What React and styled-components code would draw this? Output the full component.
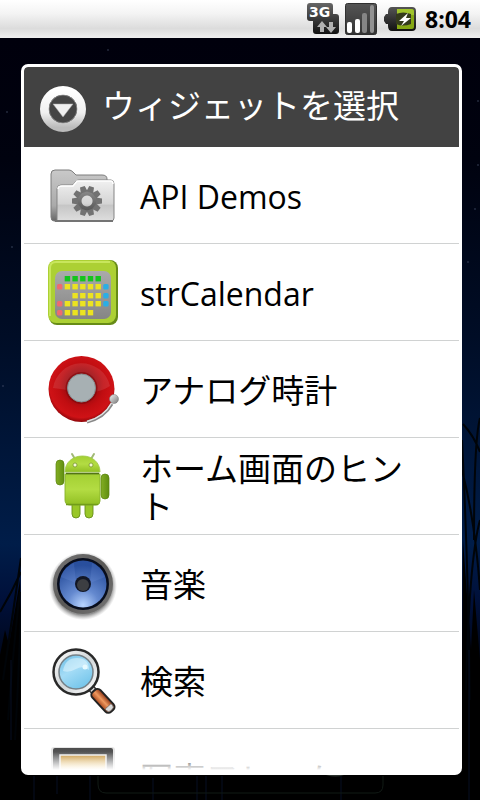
import styled, { createGlobalStyle } from "styled-components";

const GlobalStyle = createGlobalStyle`
  * {
    box-sizing: border-box;
  }

  body {
    margin: 0;
    background: #000;
    font-family: "Noto Sans", "Noto Sans CJK JP", sans-serif;
  }
`;

const Screen = styled.div`
  position: relative;
  display: flex;
  flex-direction: column;
  height: 100vh;
  overflow: hidden;
  background: linear-gradient(#00000c 5%, #00020f 20%, #000d26 42%, #001d49 68%, #00103a 75%, #000 88%);
`;

const Wallpaper = styled.svg`
  position: absolute;
  inset: 0;
  width: 100%;
  height: 100%;
`;

const StatusBar = styled.header`
  position: relative;
  display: flex;
  flex: none;
  align-items: center;
  justify-content: flex-end;
  gap: 6px;
  height: 38px;
  padding-right: 9px;
  background: linear-gradient(#fff, #f4f4f4 35%, #dcdcdc 75%, #f0f0f0);
`;

const Clock = styled.time`
  margin-left: 2px;
  color: #000;
  font-family: "Open Sans", "Noto Sans", sans-serif;
  font-size: 23px;
  font-weight: 700;
  line-height: 38px;
`;

const Backdrop = styled.main`
  position: relative;
  display: flex;
  flex: 1;
  min-height: 0;
  padding: 26px 18px 25px 21px;
`;

const Dialog = styled.section`
  display: flex;
  flex: 1;
  flex-direction: column;
  min-width: 0;
  overflow: hidden;
  border: 3px solid #fff;
  border-bottom-width: 5px;
  border-radius: 7px;
  background: #fff;
`;

const DialogHeader = styled.div`
  display: flex;
  flex: none;
  align-items: center;
  gap: 14px;
  height: 80px;
  padding: 0 14px;
  border-radius: 4px 4px 0 0;
  background: #424242;
`;

const Title = styled.h1`
  margin: 0;
  padding-bottom: 3px;
  color: #fff;
  font-size: 33px;
  font-weight: 400;
  line-height: 38px;
  white-space: nowrap;
`;

const ListFrame = styled.div`
  position: relative;
  flex: 1;
  min-height: 0;

  &::after {
    content: "";
    position: absolute;
    right: 0;
    bottom: 0;
    left: 0;
    height: 18px;
    background: linear-gradient(rgba(255, 255, 255, 0), #fff);
    pointer-events: none;
  }
`;

const List = styled.ul`
  height: 100%;
  margin: 0;
  padding: 0;
  overflow-y: auto;
  list-style: none;
  scrollbar-width: none;
`;

const Item = styled.li`
  border-bottom: 1px solid #d0d2d2;
`;

const ItemButton = styled.button`
  display: flex;
  align-items: center;
  gap: 21px;
  width: 100%;
  min-height: 96px;
  padding: 3px 32px 0 23px;
  border: 0;
  background: none;
  color: #000;
  font-family: inherit;
  font-size: 33px;
  line-height: 38px;
  text-align: left;
  cursor: pointer;

  svg {
    flex: none;
  }
`;

const Latin = styled.span`
  font-family: "Open Sans", "Noto Sans", sans-serif;
  font-size: 32px;
`;

function NightSky() {
  return (
    <Wallpaper viewBox="0 0 480 800" preserveAspectRatio="none" aria-hidden="true">
      <g fill="#5a6680" opacity=".4">
        <circle cx="108" cy="50" r="1" />
        <circle cx="478" cy="101" r="1" />
        <circle cx="478" cy="165" r="1" />
        <circle cx="475" cy="209" r="1" />
        <circle cx="7" cy="112" r="1" />
        <circle cx="3" cy="386" r="1" />
        <circle cx="468" cy="262" r="1" />
        <circle cx="12" cy="247" r="1" />
      </g>
      <path
        d="M0 655 5 630 9 645 20 580 22 650 22 800H0ZM480 660 474 590 471 650 463 540 461 800H480Z"
        fill="#000"
      />
      <g fill="none" stroke="#000408" strokeWidth="2">
        <path d="M0 612Q12 592 21 572M3 680Q12 620 21 558M8 720Q14 640 20 592M15 740Q18 690 21 610" />
        <path d="M462 440Q468 560 470 700M480 418Q474 440 474 540M463 424Q474 436 480 452M480 520Q469 560 466 690M462 470Q475 520 480 590" />
      </g>
      <g stroke="#10204e" opacity=".45">
        <path d="M34 776V800M57 776V794M90 776V800M153 778V800M197 776V800M206 776V800M222 776V800M341 776V800M469 650V800M11 660V740" />
      </g>
      <path d="M98 776V784Q98 793 106 793H375Q383 793 383 785V776" fill="none" stroke="#111a15" />
      <path d="M326 775Q336 778 344 775Z" fill="#29302b" />
    </Wallpaper>
  );
}

const NetworkLabel = styled.text`
  fill: #fff;
  font-family: "DejaVu Sans", sans-serif;
  font-size: 14px;
  font-weight: 700;
`;

function NetworkIcon() {
  return (
    <svg width="32" height="32" viewBox="0 0 32 32" role="img" aria-label="3G">
      <defs>
        <linearGradient id="net" x2="0" y2="1">
          <stop stopColor="#666" />
          <stop offset="1" stopColor="#111" />
        </linearGradient>
      </defs>
      <path
        d="M3 0H23Q26 0 26 3V11H29Q32 11 32 14V28Q32 31 29 31H9Q6 31 6 28V18H3Q0 18 0 15V3Q0 0 3 0Z"
        fill="url(#net)"
      />
      <NetworkLabel x="2" y="14">
        3G
      </NetworkLabel>
      <path d="M15 18 20 24H17V29H13V24H10ZM24 30 19 24H22V19H26V24H29Z" fill="#b0b0b0" />
    </svg>
  );
}

function SignalIcon() {
  return (
    <svg width="32" height="32" viewBox="0 0 32 32" aria-hidden="true">
      <defs>
        <linearGradient id="sig" x2="0" y2="1">
          <stop stopColor="#555" />
          <stop offset="1" stopColor="#333" />
        </linearGradient>
      </defs>
      <rect x=".5" y=".5" width="31" height="31" rx="2" fill="url(#sig)" stroke="#303030" />
      <rect x="2" y="19" width="5" height="11" rx="2" fill="#fff" />
      <rect x="10" y="16" width="5" height="14" rx="2" fill="#fff" />
      <rect x="17" y="10" width="5" height="20" rx="2" fill="#858585" />
      <rect x="25" y="2" width="4" height="28" rx="2" fill="#929292" />
    </svg>
  );
}

function BatteryIcon() {
  return (
    <svg width="34" height="24" viewBox="0 0 34 24" aria-hidden="true">
      <defs>
        <linearGradient id="bat" x2="0" y2="1">
          <stop stopColor="#555" />
          <stop offset="1" stopColor="#111" />
        </linearGradient>
      </defs>
      <path d="M9 0H29Q33 0 33 4V20Q33 24 29 24H9Q5 24 5 19V17H3L1 14V10L3 7H5V5Q5 0 9 0Z" fill="url(#bat)" />
      <path d="M14 2H29Q31 2 31 4V20Q31 22 29 22H14Z" fill="#86a814" />
      <path d="M14 2H28Q31 2 31 5V8H14Z" fill="#a0c42c" />
      <path d="M13 7Q20 4 28 7V17Q20 20 13 17Z" fill="#343b1c" />
      <path d="M25 6 16 14H21L18 19 28 11H23Z" fill="#fff" />
    </svg>
  );
}

function DropdownIcon() {
  return (
    <svg width="50" height="50" viewBox="0 0 50 50" aria-hidden="true">
      <defs>
        <linearGradient id="ring" x2="0" y2="1">
          <stop stopColor="#fff" />
          <stop offset=".6" stopColor="#f0f0f0" />
          <stop offset="1" stopColor="#bbb" />
        </linearGradient>
      </defs>
      <circle cx="25" cy="28" r="22" fill="#282828" opacity=".3" />
      <circle cx="25" cy="27" r="18.5" fill="none" stroke="url(#ring)" strokeWidth="9" />
      <circle cx="25" cy="27" r="14" fill="#454545" stroke="#9b9b9b" strokeWidth=".7" />
      <path d="M15 22H35L25 35Z" fill="#f0f0f0" stroke="#aaa" strokeWidth=".5" />
    </svg>
  );
}

function FolderIcon() {
  const teeth = Array.from({ length: 10 }, (_, i) => i * 36);

  return (
    <svg width="72" height="72" viewBox="0 0 72 72" aria-hidden="true">
      <defs>
        <linearGradient id="folderBack" x2="0" y2="1">
          <stop stopColor="#c9c9c9" />
          <stop offset=".7" stopColor="#aaa" />
          <stop offset="1" stopColor="#666" />
        </linearGradient>
        <linearGradient id="folderFront" x2="0" y2="1">
          <stop stopColor="#f1f1f1" />
          <stop offset=".58" stopColor="#d4d4d4" />
          <stop offset=".62" stopColor="#c6c6c6" />
          <stop offset="1" stopColor="#dedede" />
        </linearGradient>
        <linearGradient id="gear" gradientUnits="userSpaceOnUse" x1="40" y1="24" x2="40" y2="54">
          <stop stopColor="#999" />
          <stop offset="1" stopColor="#4c4c4c" />
        </linearGradient>
      </defs>
      <path
        d="M8 9H22Q24 9 26 11L29 14H55Q60 14 60 18V60H7Q4 60 4 56V13Q4 9 8 9Z"
        fill="url(#folderBack)"
        stroke="#7d7d7d"
      />
      <path
        d="M14 24H25Q27 24 28 21Q29 19 32 19H64Q67 19 67 23V57Q67 60 64 60H10V28Q10 24 14 24Z"
        fill="url(#folderFront)"
        stroke="#858585"
      />
      <path d="M11 28Q11 25 15 25H26L30 20H64Q66 20 66 23" fill="none" stroke="#fff" strokeWidth="1.5" />
      <path d="M8 60H66" stroke="#747474" strokeWidth="2" />
      <path
        d="M40 29.5A10.5 10.5 0 1 1 39.9 29.5ZM40 34.5A5.5 5.5 0 1 0 40.1 34.5Z"
        fill="url(#gear)"
        fillRule="evenodd"
      />
      <g fill="#727272">
        {teeth.map((angle) => (
          <path key={angle} d="M36.5 31 37.5 25H42.5L43.5 31Z" transform={`rotate(${angle + 18} 40 40)`} />
        ))}
      </g>
    </svg>
  );
}

const calendarRows = [
  { y: 17, cells: " ggggg " },
  { y: 25, cells: "ryyyyyb" },
  { y: 34, cells: "  yyyyb" },
  { y: 42, cells: "ryyyyyb" },
  { y: 51, cells: "ryyyy  " },
];
const cellColors = { g: "#12c51c", r: "#ee6a70", y: "#ece320", b: "#2baee5" };

function CalendarIcon() {
  return (
    <svg width="72" height="72" viewBox="0 0 72 72" aria-hidden="true">
      <defs>
        <linearGradient id="calInner" x2="0" y2="1">
          <stop stopColor="#aaa" />
          <stop offset="1" stopColor="#858585" />
        </linearGradient>
      </defs>
      <rect x="2" y="2" width="69" height="65" rx="8" fill="#668b16" />
      <rect x="1" y="2" width="68" height="63" rx="8" fill="#acd034" />
      <path d="M3 58V10Q3 4 9 4H63" fill="none" stroke="#c8e65c" strokeWidth="2" />
      <rect x="8" y="13" width="56" height="48" rx="7" fill="url(#calInner)" />
      {calendarRows.map(({ y, cells }) =>
        cells.split("").map(
          (cell, i) =>
            cell !== " " && (
              <rect
                key={`${y}-${i}`}
                x={10 + i * 7.7}
                y={y + 1}
                width="5.4"
                height="5.4"
                rx={cell === "r" || cell === "b" ? 1.5 : 0}
                fill={cellColors[cell]}
              />
            )
        )
      )}
    </svg>
  );
}

function AlarmIcon() {
  return (
    <svg width="72" height="72" viewBox="0 0 72 72" aria-hidden="true">
      <defs>
        <radialGradient id="bell" cx=".5" cy=".45" r=".56">
          <stop offset=".4" stopColor="#a00b10" />
          <stop offset=".6" stopColor="#c00d11" />
          <stop offset=".86" stopColor="#cf1216" />
          <stop offset="1" stopColor="#850408" />
        </radialGradient>
        <linearGradient id="steel" x2="1" y2="1">
          <stop stopColor="#f3f3f3" />
          <stop offset="1" stopColor="#777" />
        </linearGradient>
      </defs>
      <circle cx="34.5" cy="34" r="33" fill="url(#bell)" />
      <path d="M6 33A29 29 0 0 1 63 31Q51 39 36 37Q20 35 6 33Z" fill="#fff" opacity=".1" />
      <path d="M40 67Q57 63 65 49" fill="none" stroke="#888" strokeWidth="3" />
      <path d="M40 66.5Q57 62 64.5 48" fill="none" stroke="#e4e4e4" strokeWidth="1.5" />
      <circle cx="34.5" cy="33" r="16" fill="#7f070b" opacity=".65" />
      <circle cx="34.5" cy="33" r="14" fill="#a7b0b3" stroke="#858d90" />
      <circle cx="67" cy="44" r="4.5" fill="url(#steel)" stroke="#777" strokeWidth=".5" />
    </svg>
  );
}

function AndroidIcon() {
  return (
    <svg width="72" height="72" viewBox="0 0 72 72" aria-hidden="true">
      <defs>
        <linearGradient id="droid" x2="0" y2="1">
          <stop stopColor="#a3d032" />
          <stop offset=".5" stopColor="#b3dc43" />
          <stop offset="1" stopColor="#91bf23" />
        </linearGradient>
        <linearGradient id="droidArm" x2="1" y2="0">
          <stop stopColor="#83ae23" />
          <stop offset="1" stopColor="#5f8d10" />
        </linearGradient>
      </defs>
      <g stroke="#a1b976" strokeWidth="2" strokeLinecap="round">
        <path d="M25 2 28 7M47 2 44 7" />
      </g>
      <g fill="url(#droidArm)" stroke="#59830f" strokeWidth=".7">
        <rect x="9" y="8" width="8" height="25" rx="4" />
        <rect x="54" y="22" width="8" height="25" rx="4" />
      </g>
      <g stroke="#688f1a" strokeWidth=".9">
        <path d="M25 50V62A4 4 0 0 0 33 62V50ZM38 50V62A4 4 0 0 0 46 62V50Z" fill="#99c728" />
        <path d="M18 22H53V49Q53 53 49 53H23Q18 53 18 48Z" fill="url(#droid)" stroke="#86b02b" />
        <path d="M18 20C18 11 25 4 35.5 4S53 11 53 20Z" fill="url(#droid)" stroke="#a0c94a" />
      </g>
      <path d="M19 21.5H52" stroke="#537316" strokeWidth="1.3" />
      <path d="M19 52.5H51" stroke="#719c19" strokeWidth="1.5" />
      <circle cx="28" cy="13" r="2" fill="#f4f8d5" stroke="#6d8d26" strokeWidth=".7" />
      <circle cx="44" cy="13" r="2" fill="#f4f8d5" stroke="#6d8d26" strokeWidth=".7" />
    </svg>
  );
}

function SpeakerIcon() {
  return (
    <svg width="72" height="72" viewBox="0 0 72 72" aria-hidden="true">
      <defs>
        <radialGradient id="shadow">
          <stop offset=".85" stopColor="#555" stopOpacity=".65" />
          <stop offset="1" stopColor="#999" stopOpacity="0" />
        </radialGradient>
        <linearGradient id="rim" x2="1" y2="1">
          <stop stopColor="#777" />
          <stop offset=".5" stopColor="#595856" />
          <stop offset="1" stopColor="#777" />
        </linearGradient>
        <radialGradient id="cone" cx=".5" cy=".95" r=".85">
          <stop stopColor="#b8d4ff" />
          <stop offset=".4" stopColor="#6489cf" />
          <stop offset="1" stopColor="#294f9d" />
        </radialGradient>
      </defs>
      <circle cx="36" cy="37" r="34" fill="url(#shadow)" />
      <circle cx="36" cy="35" r="30" fill="url(#rim)" />
      <circle cx="36" cy="35" r="26" fill="#080d1c" />
      <circle cx="36" cy="35" r="23.5" fill="url(#cone)" />
      <path d="M29 34 14 28A23 23 0 0 1 27 14ZM43 34 58 28A23 23 0 0 0 45 14Z" fill="#83aaf0" opacity=".15" />
      <circle cx="36" cy="35" r="8" fill="#121726" />
      <circle cx="36" cy="36" r="6" fill="#3c3e42" />
    </svg>
  );
}

function SearchIcon() {
  return (
    <svg width="72" height="72" viewBox="0 0 72 72" aria-hidden="true">
      <defs>
        <linearGradient id="lens" x2=".6" y2="1">
          <stop stopColor="#68bce5" />
          <stop offset=".5" stopColor="#a4dcf6" />
          <stop offset="1" stopColor="#76c6eb" />
        </linearGradient>
        <linearGradient id="chrome" x2="1" y2="1">
          <stop stopColor="#fff" />
          <stop offset=".5" stopColor="#d2d6d8" />
          <stop offset="1" stopColor="#fff" />
        </linearGradient>
        <linearGradient id="handle" x2="1" y2="0">
          <stop stopColor="#a5441b" />
          <stop offset=".5" stopColor="#ef995f" />
          <stop offset="1" stopColor="#8c3212" />
        </linearGradient>
      </defs>
      <g transform="rotate(-43 29 26)">
        <path d="M26 47H32V54H26Z" fill="#ddd" stroke="#333" strokeWidth="1.5" />
        <rect x="23.5" y="52" width="11" height="27" rx="4" fill="url(#handle)" stroke="#222" strokeWidth="2" />
        <path d="M25 73H33V75Q33 78 30 78H28Q25 78 25 75Z" fill="#d9d9d9" stroke="#555" strokeWidth=".6" />
      </g>
      <circle cx="29" cy="26" r="22.5" fill="url(#chrome)" stroke="#292929" strokeWidth="2.5" />
      <circle cx="29" cy="26" r="17" fill="url(#lens)" stroke="#758087" strokeWidth="1.5" />
      <path d="M16 25Q18 12 30 12T42 24Q36 19 29 23T16 25Z" fill="#e9faff" opacity=".5" />
      <circle cx="38" cy="21" r="2.5" fill="#e6faff" />
    </svg>
  );
}

function PictureFrameIcon() {
  return (
    <svg width="72" height="72" viewBox="0 0 72 72" aria-hidden="true">
      <defs>
        <linearGradient id="frame" x2="0" y2="1">
          <stop stopColor="#4c4c4c" />
          <stop offset=".4" stopColor="#77797c" />
          <stop offset="1" stopColor="#555" />
        </linearGradient>
        <linearGradient id="photo" x2="0" y2="1">
          <stop stopColor="#c59139" />
          <stop offset=".3" stopColor="#f1d38d" />
          <stop offset="1" stopColor="#fff4ca" />
        </linearGradient>
      </defs>
      <rect x="4" y="4" width="64" height="61" rx="3" fill="#999" opacity=".25" />
      <rect x="6" y="5" width="60" height="58" rx="2" fill="url(#frame)" />
      <rect x="13" y="12" width="46" height="44" fill="url(#photo)" stroke="#eee" strokeWidth="1.5" />
    </svg>
  );
}

const widgets = [
  { name: "API Demos", Icon: FolderIcon, latin: true },
  { name: "strCalendar", Icon: CalendarIcon, latin: true },
  { name: "アナログ時計", Icon: AlarmIcon },
  { name: "ホーム画面のヒント", Icon: AndroidIcon },
  { name: "音楽", Icon: SpeakerIcon },
  { name: "検索", Icon: SearchIcon },
  { name: "写真フレーム", Icon: PictureFrameIcon },
];

function App() {
  return (
    <Screen lang="ja">
      <GlobalStyle />
      <NightSky />
      <StatusBar>
        <NetworkIcon />
        <SignalIcon />
        <BatteryIcon />
        <Clock>8:04</Clock>
      </StatusBar>
      <Backdrop>
        <Dialog role="dialog" aria-labelledby="dialog-title">
          <DialogHeader>
            <DropdownIcon />
            <Title id="dialog-title">ウィジェットを選択</Title>
          </DialogHeader>
          <ListFrame>
            <List>
              {widgets.map(({ name, Icon, latin }) => (
                <Item key={name}>
                  <ItemButton type="button">
                    <Icon />
                    {latin ? <Latin>{name}</Latin> : <span>{name}</span>}
                  </ItemButton>
                </Item>
              ))}
            </List>
          </ListFrame>
        </Dialog>
      </Backdrop>
    </Screen>
  );
}

export default App;
